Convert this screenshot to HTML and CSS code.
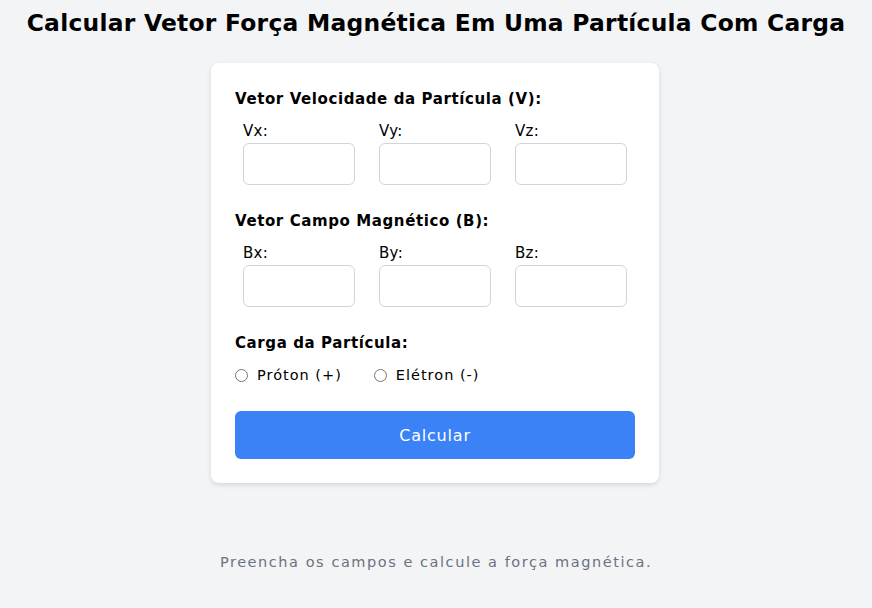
FILE: index.html
```html
<!DOCTYPE html>
<html lang="pt">
<head>
<meta charset="utf-8">
<title>Força Magnética</title>
<link rel="stylesheet" href="styles.css">
</head>
<body>
<h1 class="title">Calcular Vetor Força Magnética Em Uma Partícula Com Carga</h1>
<main class="card">
  <section class="group">
    <h2 class="group-title">Vetor Velocidade da Partícula (V):</h2>
    <div class="fields">
      <label class="field"><span class="field-label">Vx:</span><input class="field-input" type="number"></label>
      <label class="field"><span class="field-label">Vy:</span><input class="field-input" type="number"></label>
      <label class="field"><span class="field-label">Vz:</span><input class="field-input" type="number"></label>
    </div>
  </section>
  <section class="group">
    <h2 class="group-title">Vetor Campo Magnético (B):</h2>
    <div class="fields">
      <label class="field"><span class="field-label">Bx:</span><input class="field-input" type="number"></label>
      <label class="field"><span class="field-label">By:</span><input class="field-input" type="number"></label>
      <label class="field"><span class="field-label">Bz:</span><input class="field-input" type="number"></label>
    </div>
  </section>
  <section class="group">
    <h2 class="group-title">Carga da Partícula:</h2>
    <div class="radios">
      <label class="radio"><span class="radio-dot"></span>Próton (+)</label>
      <label class="radio"><span class="radio-dot"></span>Elétron (-)</label>
    </div>
  </section>
  <button class="submit" type="button">Calcular</button>
</main>
<p class="hint">Preencha os campos e calcule a força magnética.</p>
</body>
</html>
```
FILE: styles.css
```css
* { box-sizing: border-box; }
html, body { margin: 0; padding: 0; }
body {
  background: #f3f4f6;
  font-family: "DejaVu Sans", sans-serif;
  color: #000;
  display: flex;
  flex-direction: column;
  align-items: center;
}
.title {
  margin: 8px 0 0;
  font-size: 23.4px;
  line-height: 30px;
  font-weight: bold;
  letter-spacing: 0.25px;
}
.card {
  margin-top: 25px;
  margin-right: 2px;
  width: 448px;
  background: #fff;
  border-radius: 8px;
  box-shadow: 0 2px 5px rgba(0,0,0,0.12);
  padding: 24px;
}
.group { margin-bottom: 24px; }
.group-title {
  margin: 0 0 8px;
  font-size: 15px;
  line-height: 24px;
  font-weight: bold;
  letter-spacing: 0.6px;
}
.fields {
  display: grid;
  grid-template-columns: repeat(3, 112px);
  gap: 24px;
  padding: 0 8px;
}
.field { display: flex; flex-direction: column; }
.field-label {
  font-size: 15px;
  line-height: 24px;
  letter-spacing: 0.3px;
}
.field-input {
  width: 112px;
  height: 42px;
  border: 1px solid #d1d5db;
  border-radius: 6px;
  background: #fff;
}
.radios { display: flex; gap: 32px; height: 24px; align-items: center; }
.radio {
  display: flex;
  align-items: center;
  gap: 9px;
  font-size: 14.5px;
  letter-spacing: 1px;
}
.radio-dot {
  width: 13px;
  height: 13px;
  border: 1px solid #767676;
  border-radius: 50%;
}
.submit {
  display: block;
  width: 100%;
  height: 48px;
  margin-top: 24px;
  border: 0;
  border-radius: 6px;
  background: #3b82f6;
  color: #fff;
  font-family: inherit;
  font-size: 16px;
  letter-spacing: 0.8px;
}
.hint {
  margin: 67px 0 0;
  color: #6b7280;
  font-size: 14.5px;
  line-height: 24px;
  letter-spacing: 1.55px;
}
```
